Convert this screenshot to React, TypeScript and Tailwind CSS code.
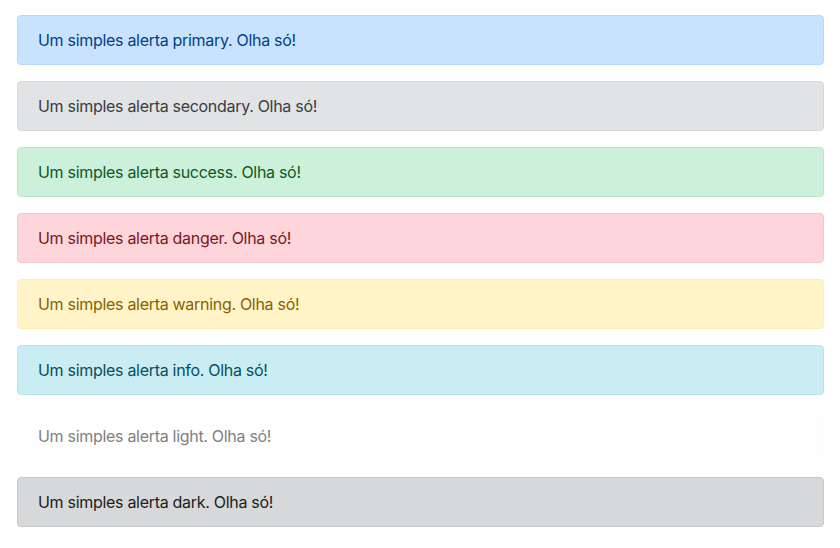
import React from "react";

const alerts = [
  { name: "primary", cls: "text-[#003f8a] bg-[#c9e3ff] border-[#b3d7ff]" },
  { name: "secondary", cls: "text-[#383d41] bg-[#e2e3e5] border-[#d6d8db]" },
  { name: "success", cls: "text-[#0b5a22] bg-[#cdf0db] border-[#bae8c8]" },
  { name: "danger", cls: "text-[#7d1622] bg-[#fdd5da] border-[#fbc4cb]" },
  { name: "warning", cls: "text-[#876200] bg-[#fff4c8] border-[#ffedb3]" },
  { name: "info", cls: "text-[#064f61] bg-[#caecf3] border-[#b8e4ed]" },
  { name: "light", cls: "text-[#818182] bg-[#fefefe] border-[#fdfdfe]" },
  { name: "dark", cls: "text-[#1b1e21] bg-[#d6d8d9] border-[#c6c8ca]" },
];

export default function App() {
  return (
    <div className="bg-white w-[840px] h-[548px] pt-[15px] pl-[17px] pr-[16px] font-['Inter',sans-serif] text-[16px] leading-[24px] tracking-[-0.3px]">
      {alerts.map((a) => (
        <div
          key={a.name}
          className={`border rounded-[4px] px-[20px] py-[12px] mb-[16px] ${a.cls}`}
        >
          Um simples alerta {a.name}. Olha só!
        </div>
      ))}
    </div>
  );
}
